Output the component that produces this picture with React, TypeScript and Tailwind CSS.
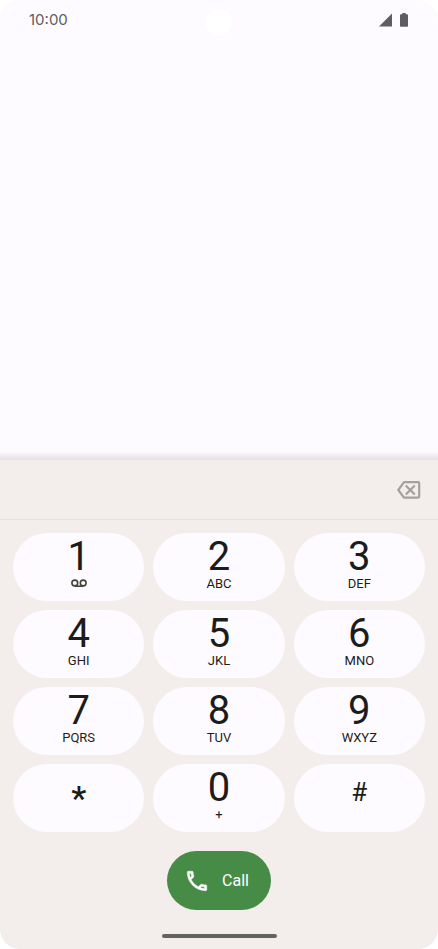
import { useState } from 'react';

interface Key {
  digit: string;
  letters?: string;
}

const KEYS: Key[] = [
  { digit: '1' },
  { digit: '2', letters: 'ABC' },
  { digit: '3', letters: 'DEF' },
  { digit: '4', letters: 'GHI' },
  { digit: '5', letters: 'JKL' },
  { digit: '6', letters: 'MNO' },
  { digit: '7', letters: 'PQRS' },
  { digit: '8', letters: 'TUV' },
  { digit: '9', letters: 'WXYZ' },
  { digit: '*' },
  { digit: '0', letters: '+' },
  { digit: '#' },
];

function StatusBar() {
  return (
    <header className="relative flex h-10 items-center justify-between pl-[29px] pr-[30px] text-[#5f5d61]">
      <span className="font-[Inter,sans-serif] text-[15px]">10:00</span>
      {/* Camera cutout */}
      <div className="absolute left-1/2 top-[9px] size-[26px] -translate-x-1/2 rounded-full bg-white" aria-hidden="true" />
      <div className="flex items-center gap-2" aria-hidden="true">
        <svg className="h-[14px] w-[13px]" viewBox="0 0 13 14" fill="currentColor">
          <path d="M13 0.5V13.5H0z" />
        </svg>
        <svg className="h-[14px] w-2" viewBox="0 0 8 14" fill="currentColor">
          <path d="M2.3 0h3.4v1.2H7a1 1 0 0 1 1 1V13a.8.8 0 0 1-.8.8H.8A.8.8 0 0 1 0 13V2.200a1 1 0 0 1 1-1h1.300z" />
        </svg>
      </div>
    </header>
  );
}

function BackspaceIcon() {
  return (
    <svg className="h-[18px] w-6" viewBox="0 0 24 18" fill="none" stroke="currentColor" strokeWidth="2.200" aria-hidden="true">
      <path d="M7 1.200H21.200a1 1 0 0 1 1 1V15.600a1 1 0 0 1-1 1H7L1.300 9z" strokeLinejoin="round" />
      <path d="M8.800 4.500l9 9M17.800 4.500l-9 9" />
    </svg>
  );
}

function VoicemailIcon() {
  return (
    <svg className="h-[14px] w-4 text-[#45413d]" viewBox="0 0 16 14" fill="none" stroke="currentColor" strokeWidth="1.600" role="img" aria-label="Voicemail">
      <circle cx="3.800" cy="6" r="2.900" />
      <circle cx="12.200" cy="6" r="2.900" />
      <path d="M3.800 9.200h8.400" />
    </svg>
  );
}

function PhoneIcon() {
  return (
    <svg className="size-[26px]" viewBox="0 0 24 24" fill="currentColor" stroke="currentColor" strokeWidth="0.400" aria-hidden="true">
      <path d="M6.540 5c.06.89.21 1.760.45 2.590l-1.200 1.200c-.41-1.200-.67-2.470-.76-3.790h1.510m9.860 12.020c.85.24 1.720.39 2.600.45v1.490c-1.320-.09-2.590-.35-3.800-.75l1.200-1.190M7.500 3H4c-.55 0-1 .45-1 1 0 9.390 7.610 17 17 17 .55 0 1-.45 1-1v-3.490c0-.55-.45-1-1-1-1.240 0-2.450-.2-3.570-.57a.84.84 0 0 0-.31-.05c-.26 0-.51.1-.71.29l-2.200 2.200a15.150 15.150 0 0 1-6.590-6.590l2.200-2.200c.28-.28.36-.67.25-1.020A11.360 11.360 0 0 1 8.500 4c0-.55-.45-1-1-1z" />
    </svg>
  );
}

function KeyFace({ digit, letters }: Key) {
  if (digit === '*') {
    return <span className="pt-[14px] text-[34px] leading-10 font-medium">*</span>;
  }
  if (digit === '#') {
    return <span className="pt-2 text-[26px] leading-10">#</span>;
  }
  return (
    <>
      <span className="pt-1 text-[40px] leading-10">{digit}</span>
      {letters ? <span className="text-[13px] leading-[14px]">{letters}</span> : <VoicemailIcon />}
    </>
  );
}

export default function App() {
  const [number, setNumber] = useState('');

  return (
    <div className="min-h-screen bg-white font-['Roboto',sans-serif]">
      <div className="flex min-h-screen flex-col overflow-hidden rounded-[20px] bg-[#fdfbff]">
        <StatusBar />
        <main className="flex flex-1 flex-col justify-end">
          <div className="h-[9px] bg-linear-to-b from-[#fdfbff] to-[#e3e1e7]" aria-hidden="true" />
          <section className="bg-[#f3eeeb]" aria-label="Dial pad">
            <div className="flex h-[60px] items-center border-b border-[#f3dccb] pr-[17px] pl-4">
              <input
                type="tel"
                aria-label="Phone number"
                value={number}
                onChange={(e) => setNumber(e.target.value)}
                className="min-w-0 flex-1 bg-transparent text-center text-3xl text-[#1d1c1a] outline-none"
              />
              <button
                type="button"
                aria-label="Backspace"
                onClick={() => setNumber((n) => n.slice(0, -1))}
                className="text-[#a5a09d]"
              >
                <BackspaceIcon />
              </button>
            </div>

            <div className="grid grid-cols-3 gap-[9px] px-[13px] pt-[13px]">
              {KEYS.map((key) => (
                <button
                  key={key.digit}
                  type="button"
                  onClick={() => setNumber((n) => n + key.digit)}
                  className="flex h-17 flex-col items-center rounded-full bg-[#fdfbff] text-[#1d1c1a] active:bg-[#ece8ea]"
                >
                  <KeyFace {...key} />
                </button>
              ))}
            </div>

            <div className="flex flex-col items-center gap-6 pt-[19px] pb-[11px]">
              <button
                type="button"
                className="flex h-[59px] items-center gap-3 rounded-full bg-[#468c47] pr-[22px] pl-[17px] text-white"
              >
                <PhoneIcon />
                <span className="text-base">Call</span>
              </button>
              <div className="h-1 w-[115px] rounded-full bg-[#65635f]" aria-hidden="true" />
            </div>
          </section>
        </main>
      </div>
    </div>
  );
}
